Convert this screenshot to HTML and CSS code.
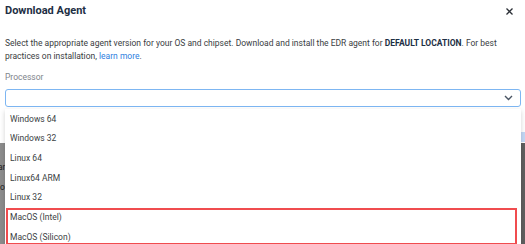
FILE: index.html
```html
<!DOCTYPE html>
<html lang="en">
<head>
  <meta charset="UTF-8">
  <meta name="viewport" content="width=device-width, initial-scale=1.0">
  <title>Download Agent</title>
  <link rel="stylesheet" href="styles.css">
</head>
<body>
  <div class="modal">
    <div class="modal-header">
      <h1 class="modal-title">Download Agent</h1>
      <button class="close-btn" aria-label="Close">
        <svg width="7" height="7" viewBox="0 0 7 7"><path d="M0.5 0.5 L6.5 6.5 M6.5 0.5 L0.5 6.5" stroke="#2b2f36" stroke-width="1.3" fill="none"/></svg>
      </button>
    </div>

    <p class="intro">
      Select the appropriate agent version for your OS and chipset. Download and install the EDR agent for <b>DEFAULT LOCATION</b>. For best
      practices on installation, <a href="#">learn more</a>.
    </p>

    <div class="label">Processor</div>

    <div class="field">
      <div class="select">
        <svg class="chevron" width="9" height="6" viewBox="0 0 9 6"><path d="M1 1 L4.5 4.5 L8 1" stroke="#4a5563" stroke-width="1.4" fill="none"/></svg>
      </div>

      <!-- lista aberta por cima do resto -->
      <ul class="dropdown">
        <li>Windows 64</li>
        <li>Windows 32</li>
        <li>Linux 64</li>
        <li>Linux64 ARM</li>
        <li>Linux 32</li>
        <li class="group">
          <ul>
            <li>MacOS (Intel)</li>
            <li>MacOS (Silicon)</li>
          </ul>
        </li>
      </ul>
    </div>

    <div class="actions">
      <span class="action-btn"></span>
    </div>

    <div class="preview">
      <div class="preview-line">ar</div>
      <div class="preview-line">lo</div>
    </div>
  </div>
</body>
</html>
```

FILE: styles.css
```css
* {
  margin: 0;
  padding: 0;
  box-sizing: border-box;
}

body {
  background: #fff;
  font-family: Roboto, 'Liberation Sans', sans-serif;
  width: 525px;
  height: 244px;
  overflow: hidden;
}

.modal {
  padding: 0 4px 0 5px;
}

.modal-header {
  display: flex;
  align-items: center;
  justify-content: space-between;
  padding-top: 4px;
  height: 17px;
}

.modal-title {
  font-size: 11px;
  line-height: 13px;
  font-weight: 700;
  color: #1d2f44;
}

.close-btn {
  background: none;
  border: none;
  display: flex;
  margin-right: 8px;
  margin-top: 2px;
}

.intro {
  margin-top: 19.5px;
  font-size: 8.5px;
  line-height: 13px;
  color: #3a3d42;
}

.intro b {
  color: #1d2f44;
}

.intro a {
  color: #2f80e0;
  text-decoration: none;
}

.label {
  margin-top: 8.5px;
  font-size: 8.5px;
  line-height: 12px;
  color: #80858c;
}

.field {
  position: relative;
  margin-top: 6px;
}

.select {
  height: 18px;
  border: 1px solid #7db6f2;
  border-radius: 3px;
  display: flex;
  align-items: center;
  justify-content: flex-end;
  padding-right: 7px;
}

.dropdown {
  position: absolute;
  left: 0;
  right: 0;
  top: calc(100% + 1.5px);
  background: #fff;
  list-style: none;
  box-shadow: 0 2px 5px rgba(0, 0, 0, 0.18);
  z-index: 10;
}

.dropdown li {
  height: 19.7px;
  line-height: 20.5px;
  padding-left: 5px;
  font-size: 8.5px;
  color: #3c3f44;
}

.dropdown .group {
  height: auto;
  padding: 0;
  margin: 0 4px 0 1px;
  position: relative;
}

.dropdown .group ul {
  list-style: none;
}

.dropdown .group li {
  padding-left: 4px;
}

.dropdown .group::after {
  content: '';
  position: absolute;
  left: 0;
  right: 0;
  top: 1.5px;
  bottom: 1.5px;
  border: 2px solid #f04c4f;
}

.actions {
  display: flex;
  justify-content: flex-end;
  margin-top: 25px;
  margin-right: -4px;
  height: 10px;
}

.action-btn {
  width: 70px;
  background: #c3d8f6;
}

.preview {
  margin: 1px -4px 0 -5px;
  height: 101px;
  background: linear-gradient(90deg, #8c8c8c 0%, #777 60%, #5f5f5f 100%);
  padding-top: 14px;
}

.preview-line {
  font-size: 8.5px;
  line-height: 20px;
  color: #222;
  text-indent: -2px;
}
```
